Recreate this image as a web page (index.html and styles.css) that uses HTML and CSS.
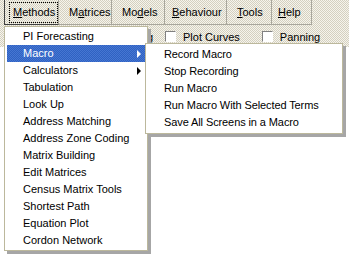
FILE: index.html
```html
<!DOCTYPE html>
<html lang="en">
<head>
  <meta charset="UTF-8">
  <title>Methods menu</title>
  <link rel="stylesheet" href="styles.css">
</head>
<body>
  <div class="janela">
    <!-- barra de menus -->
    <div class="menubar">
      <div class="item ativo"><span class="foco"><u>M</u>ethods</span></div>
      <div class="item">M<u>a</u>trices</div>
      <div class="item">Mo<u>d</u>els</div>
      <div class="item"><u>B</u>ehaviour</div>
      <div class="item"><u>T</u>ools</div>
      <div class="item"><u>H</u>elp</div>
    </div>

    <!-- barra de ferramentas -->
    <div class="toolbar">
      <span class="corte">g</span>
      <span class="check"></span><span class="rotulo">Plot Curves</span>
      <span class="check segundo"></span><span class="rotulo">Panning</span>
    </div>

    <div class="area"></div>

    <!-- menu Methods -->
    <div class="menu principal">
      <div class="opcao">PI Forecasting</div>
      <div class="opcao marcada">Macro<span class="seta"></span></div>
      <div class="opcao">Calculators<span class="seta"></span></div>
      <div class="opcao">Tabulation</div>
      <div class="opcao">Look Up</div>
      <div class="opcao">Address Matching</div>
      <div class="opcao">Address Zone Coding</div>
      <div class="opcao">Matrix Building</div>
      <div class="opcao">Edit Matrices</div>
      <div class="opcao">Census Matrix Tools</div>
      <div class="opcao">Shortest Path</div>
      <div class="opcao">Equation Plot</div>
      <div class="opcao">Cordon Network</div>
    </div>

    <!-- submenu Macro -->
    <div class="menu sub">
      <div class="opcao">Record Macro</div>
      <div class="opcao">Stop Recording</div>
      <div class="opcao">Run Macro</div>
      <div class="opcao">Run Macro With Selected Terms</div>
      <div class="opcao">Save All Screens in a Macro</div>
    </div>
  </div>
</body>
</html>
```

FILE: styles.css
```css
body, html {
  margin: 0;
  padding: 0;
  width: 100%;
  height: 100%;
  overflow: hidden;
  font-family: 'Liberation Sans', Arial, sans-serif;
  font-size: 11px;
  color: #000;
  background: #fff;
}

.janela {
  position: relative;
  width: 349px;
  height: 262px;
  display: flex;
  flex-direction: column;
}

/* Barra de menus */
.menubar {
  height: 26px;
  display: flex;
  padding-left: 4px;
  background: repeating-conic-gradient(#f6f4ec 0 25%, #d4d0c0 0 50%) 0 0 / 2px 2px;
}

.item {
  height: 25px;
  line-height: 24px;
  padding: 0 0 0 10px;
  border-right: 1px solid #a8a69c;
  border-bottom: 1px solid #a8a69c;
  box-sizing: border-box;
}

.item:nth-child(2) { width: 53px; }
.item:nth-child(3) { width: 53px; }
.item:nth-child(4) { width: 62px; padding-left: 7px; }
.item:nth-child(5) { width: 45px; }
.item:nth-child(6) { width: 40px; padding-left: 6px; }

.ativo {
  width: 55px;
  padding: 2px 0 0 4px;
  border-left: 1px solid #404040;
  border-bottom: 1px solid #404040;
  line-height: normal;
}

.foco {
  display: block;
  height: 19px;
  line-height: 19px;
  padding-left: 3px;
  border: 1px dotted #000;
}

/* Barra de ferramentas */
.toolbar {
  height: 21px;
  display: flex;
  align-items: center;
  background: repeating-conic-gradient(#f6f4ec 0 25%, #d4d0c0 0 50%) 0 0 / 2px 2px;
}

.corte {
  margin-left: 147px;
  width: 6px;
  overflow: hidden;
}

.check {
  width: 9px;
  height: 9px;
  margin-left: 12px;
  background: #fff;
  border-top: 1px solid #808080;
  border-left: 1px solid #808080;
  border-right: 1px solid #fff;
  border-bottom: 1px solid #fff;
}

.check.segundo {
  margin-left: 22px;
}

.rotulo {
  margin-left: 7px;
}

.area {
  flex: 1;
  background: #fff;
}

/* Menus suspensos */
.menu {
  position: absolute;
  background: #fff;
  border: 1px solid #bcb89c;
  box-shadow: 3px 3px 0 #a6a6a6;
}

.principal {
  left: 4px;
  top: 26px;
  width: 138px;
  padding: 1px 2px 1px 2px;
}

.sub {
  left: 145px;
  top: 43px;
  width: 192px;
  padding: 2px 2px;
}

.opcao {
  position: relative;
  height: 17px;
  line-height: 17px;
  padding-left: 16px;
  white-space: nowrap;
}

.sub .opcao {
  letter-spacing: -0.1px;
}

.marcada {
  color: #fff;
  background: repeating-conic-gradient(#2f62c2 0 25%, #4676d2 0 50%) 0 0 / 2px 2px;
}

.seta {
  position: absolute;
  right: 4px;
  top: 5px;
  width: 0;
  height: 0;
  border-top: 4px solid transparent;
  border-bottom: 4px solid transparent;
  border-left: 4px solid #000;
}

.marcada .seta {
  border-left-color: #fff;
}
```
